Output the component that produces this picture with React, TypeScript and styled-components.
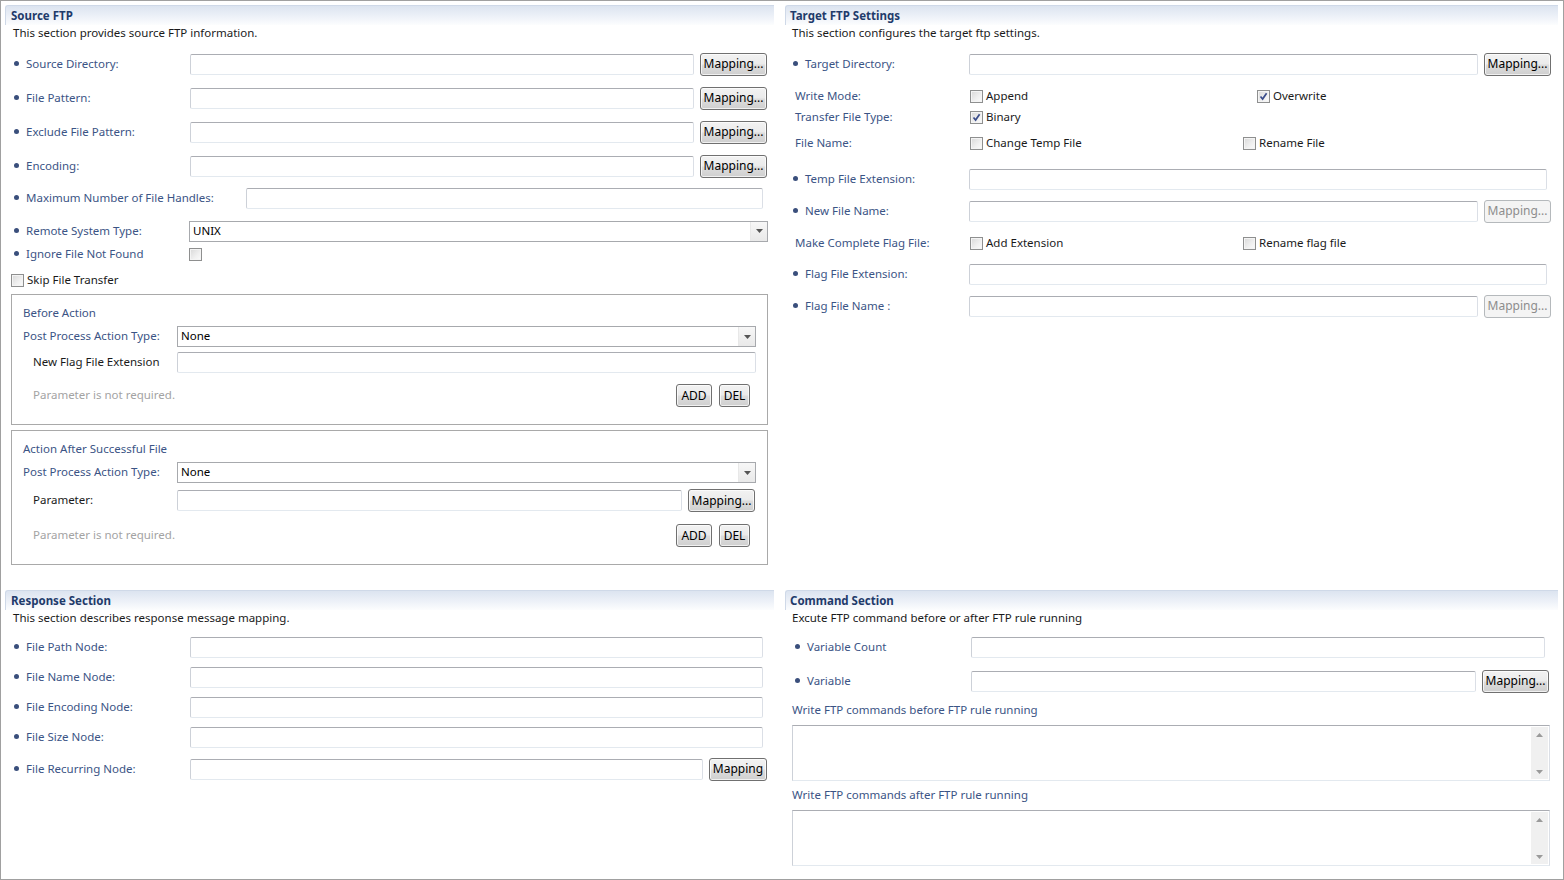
import React from 'react';
import styled, { createGlobalStyle } from 'styled-components';

const Global = createGlobalStyle`
  html, body { margin: 0; padding: 0; background: #fff; }
  body { font-family: "Noto Sans", "Liberation Sans", sans-serif; font-size: 11.5px; color: #1a1a1a; }
  * { box-sizing: border-box; }
`;

const Page = styled.div`
  width: 1564px;
  height: 880px;
  border: 1px solid #a0a0a0;
  padding: 4px 5px 4px 4px;
  display: grid;
  grid-template-columns: 769px 773px;
  grid-template-rows: 585px 1fr;
  column-gap: 11px;
  background: #fff;
`;

const Section = styled.section`
  display: flex;
  flex-direction: column;
  min-width: 0;
`;

const Header = styled.div<{ $pl: number }>`
  height: 20px;
  padding-left: ${p => p.$pl}px;
  line-height: 19px;
  font-weight: 700;
  color: #1f3b6b;
  border-top: 1px solid #cfd9e8;
  border-left: 1px solid #cfd9e8;
  border-top-left-radius: 3px;
  background: linear-gradient(to bottom, #dce4f0 0%, #edf1f8 55%, #fcfdfe 100%);
`;

const Desc = styled.div<{ $pl: number }>`
  height: 16px;
  line-height: 16px;
  padding-left: ${p => p.$pl}px;
  color: #1a1a1a;
`;

const Row = styled.div<{ $mt: number; $h?: number; $pr?: number; $pl?: number }>`
  display: flex;
  align-items: center;
  gap: 6px;
  height: ${p => p.$h ?? 22}px;
  margin-top: ${p => p.$mt}px;
  padding-right: ${p => p.$pr ?? 0}px;
  padding-left: ${p => p.$pl ?? 0}px;
  flex: none;
`;

const Label = styled.div<{ $w: number; $pl: number; $dark?: boolean }>`
  flex: none;
  width: ${p => p.$w}px;
  padding-left: ${p => p.$pl}px;
  padding-bottom: 2px;
  margin-right: -6px;
  display: flex;
  align-items: center;
  white-space: nowrap;
  color: ${p => (p.$dark ? '#1a1a1a' : '#3b5485')};
`;

const Bullet = styled.span`
  flex: none;
  width: 5px;
  height: 5px;
  border-radius: 50%;
  background: #3a4f7c;
  margin-right: 7px;
  margin-top: 1px;
`;

const Field = styled.div<{ $h?: number }>`
  flex: 1;
  min-width: 0;
  height: ${p => p.$h ?? 21}px;
  border: 1px solid;
  border-color: #abadb3 #dbdfe6 #e3e9ef #cdd1d8;
  border-radius: 2px;
  background: #fff;
`;

const Combo = styled.div`
  flex: 1;
  min-width: 0;
  height: 21px;
  border: 1px solid #a7a9ad;
  background: #fff;
  display: flex;
  align-items: stretch;
`;

const ComboText = styled.div`
  flex: 1;
  padding-left: 3px;
  line-height: 18px;
  color: #000;
`;

const ComboArrow = styled.div`
  flex: none;
  width: 17px;
  border-left: 1px solid #e8e8e8;
  background: linear-gradient(to bottom, #f7f7f7, #e9e9e9);
  display: flex;
  align-items: center;
  justify-content: center;
`;

const Btn = styled.div<{ $w: number; $disabled?: boolean }>`
  flex: none;
  width: ${p => p.$w}px;
  height: 23px;
  border: 1px solid ${p => (p.$disabled ? '#b5b9bc' : '#707070')};
  border-radius: 3px;
  background: ${p =>
    p.$disabled
      ? '#f4f4f4'
      : 'linear-gradient(to bottom, #f2f2f2 0%, #ebebeb 48%, #dddddd 52%, #cfcfcf 100%)'};
  box-shadow: ${p => (p.$disabled ? 'none' : 'inset 0 0 0 1px rgba(255,255,255,0.7)')};
  color: ${p => (p.$disabled ? '#8d8d8d' : '#000')};
  display: flex;
  align-items: center;
  justify-content: center;
  line-height: 1;
  font-size: 12px;
  white-space: nowrap;
`;

const BoxMark = styled.span`
  flex: none;
  width: 13px;
  height: 13px;
  border: 1px solid #8e8f8f;
  background: linear-gradient(135deg, #d8d8d8 0%, #f0f0f0 60%, #fbfbfb 100%);
  box-shadow: inset 0 0 0 1px #f4f4f4;
  display: flex;
  align-items: center;
  justify-content: center;
`;

const CheckItem = styled.div<{ $w?: number }>`
  flex: none;
  width: ${p => (p.$w ? `${p.$w}px` : 'auto')};
  display: flex;
  align-items: center;
  gap: 3px;
  color: #1a1a1a;
  white-space: nowrap;
`;

const CheckText = styled.span`
  margin-top: -2px;
`;

const Group = styled.div<{ $mt: number; $h: number }>`
  flex: none;
  height: ${p => p.$h}px;
  margin: ${p => p.$mt}px 6px 0 6px;
  border: 1px solid #a9a9a9;
  padding: 10px 11px 0 11px;
  display: flex;
  flex-direction: column;
`;

const GroupTitle = styled.div`
  height: 16px;
  line-height: 16px;
  color: #3b5485;
`;

const Hint = styled.div`
  flex: 1;
  padding-left: 10px;
  padding-bottom: 2px;
  color: #a3a3a3;
`;

const TextLine = styled.div<{ $mt: number; $pl: number }>`
  height: 16px;
  line-height: 16px;
  margin-top: ${p => p.$mt}px;
  padding-left: ${p => p.$pl}px;
  color: #3b5485;
`;

const TextArea = styled.div<{ $mt: number }>`
  flex: none;
  height: 56px;
  margin: ${p => p.$mt}px 8px 0 7px;
  border: 1px solid;
  border-color: #abadb3 #dbdfe6 #e3e9ef #cdd1d8;
  display: flex;
  justify-content: flex-end;
  background: #fff;
`;

const ScrollBar = styled.div`
  width: 17px;
  margin: 1px 1px 1px 0;
  background: #f0f0f0;
  display: flex;
  flex-direction: column;
  justify-content: space-between;
  align-items: center;
  padding: 6px 0 5px;
`;

const Arrow = ({ up }: { up?: boolean }) => (
  <svg width="7" height="4" viewBox="0 0 7 4">
    <path d={up ? 'M0 4 L3.5 0 L7 4 Z' : 'M0 0 L7 0 L3.5 4 Z'} fill="#9a9a9a" />
  </svg>
);

const Check = ({ checked, w, children }: { checked?: boolean; w?: number; children?: React.ReactNode }) => (
  <CheckItem $w={w}>
    <BoxMark>
      {checked && (
        <svg width="9" height="9" viewBox="0 0 9 9">
          <path d="M1.5 4.5 L3.6 7 L7.6 1.2" fill="none" stroke="#3a4c8a" strokeWidth="1.7" />
        </svg>
      )}
    </BoxMark>
    {children && <CheckText>{children}</CheckText>}
  </CheckItem>
);

const DropDown = ({ value }: { value: string }) => (
  <Combo>
    <ComboText>{value}</ComboText>
    <ComboArrow>
      <svg width="7" height="4" viewBox="0 0 7 4">
        <path d="M0 0 L7 0 L3.5 4 Z" fill="#555" />
      </svg>
    </ComboArrow>
  </Combo>
);

const BL = ({ w, pl, children }: { w: number; pl: number; children: React.ReactNode }) => (
  <Label $w={w} $pl={pl}>
    <Bullet />
    {children}
  </Label>
);

export default function App() {
  return (
    <>
      <Global />
      <Page>
        {/* Source FTP */}
        <Section>
          <Header $pl={5}>Source FTP</Header>
          <Desc $pl={8}>This section provides source FTP information.</Desc>
          {['Source Directory:', 'File Pattern:', 'Exclude File Pattern:', 'Encoding:'].map(t => (
            <Row key={t} $mt={12} $pr={7}>
              <BL w={185} pl={9}>{t}</BL>
              <Field />
              <Btn $w={67}>Mapping...</Btn>
            </Row>
          ))}
          <Row $mt={10} $pr={11}>
            <BL w={241} pl={9}>Maximum Number of File Handles:</BL>
            <Field />
          </Row>
          <Row $mt={11} $pr={6}>
            <BL w={184} pl={9}>Remote System Type:</BL>
            <DropDown value="UNIX" />
          </Row>
          <Row $mt={1}>
            <BL w={184} pl={9}>Ignore File Not Found</BL>
            <Check />
          </Row>
          <Row $mt={4} $pl={6}>
            <Check>Skip File Transfer</Check>
          </Row>
          <Group $mt={3} $h={131}>
            <GroupTitle>Before Action</GroupTitle>
            <Row $mt={5} $h={21}>
              <Label $w={154} $pl={0}>Post Process Action Type:</Label>
              <DropDown value="None" />
            </Row>
            <Row $mt={5} $h={21}>
              <Label $w={154} $pl={10} $dark>New Flag File Extension</Label>
              <Field />
            </Row>
            <Row $mt={11} $h={23} $pr={6}>
              <Hint>Parameter is not required.</Hint>
              <Btn $w={36}>ADD</Btn>
              <Btn $w={31} style={{ marginLeft: 1 }}>DEL</Btn>
            </Row>
          </Group>
          <Group $mt={5} $h={135}>
            <GroupTitle>Action After Successful File</GroupTitle>
            <Row $mt={5} $h={21}>
              <Label $w={154} $pl={0}>Post Process Action Type:</Label>
              <DropDown value="None" />
            </Row>
            <Row $mt={6} $h={23} $pr={1}>
              <Label $w={154} $pl={10} $dark>Parameter:</Label>
              <Field />
              <Btn $w={67}>Mapping...</Btn>
            </Row>
            <Row $mt={12} $h={23} $pr={6}>
              <Hint>Parameter is not required.</Hint>
              <Btn $w={36}>ADD</Btn>
              <Btn $w={31} style={{ marginLeft: 1 }}>DEL</Btn>
            </Row>
          </Group>
        </Section>

        {/* Target FTP */}
        <Section>
          <Header $pl={4}>Target FTP Settings</Header>
          <Desc $pl={7}>This section configures the target ftp settings.</Desc>
          <Row $mt={12} $pr={7}>
            <BL w={184} pl={8}>Target Directory:</BL>
            <Field />
            <Btn $w={67}>Mapping...</Btn>
          </Row>
          <Row $mt={11} $h={20}>
            <Label $w={185} $pl={10}>Write Mode:</Label>
            <Check w={281}>Append</Check>
            <Check checked>Overwrite</Check>
          </Row>
          <Row $mt={1} $h={20}>
            <Label $w={185} $pl={10}>Transfer File Type:</Label>
            <Check checked>Binary</Check>
          </Row>
          <Row $mt={6} $h={20}>
            <Label $w={185} $pl={10}>File Name:</Label>
            <Check w={267}>Change Temp File</Check>
            <Check>Rename File</Check>
          </Row>
          <Row $mt={15} $pr={11}>
            <BL w={184} pl={8}>Temp File Extension:</BL>
            <Field />
          </Row>
          <Row $mt={10} $pr={7}>
            <BL w={184} pl={8}>New File Name:</BL>
            <Field />
            <Btn $w={67} $disabled>Mapping...</Btn>
          </Row>
          <Row $mt={11} $h={20}>
            <Label $w={185} $pl={10}>Make Complete Flag File:</Label>
            <Check w={267}>Add Extension</Check>
            <Check>Rename flag file</Check>
          </Row>
          <Row $mt={10} $pr={11}>
            <BL w={184} pl={8}>Flag File Extension:</BL>
            <Field />
          </Row>
          <Row $mt={10} $pr={7}>
            <BL w={184} pl={8}>Flag File Name :</BL>
            <Field />
            <Btn $w={67} $disabled>Mapping...</Btn>
          </Row>
        </Section>

        {/* Response Section */}
        <Section>
          <Header $pl={5}>Response Section</Header>
          <Desc $pl={8}>This section describes response message mapping.</Desc>
          {['File Path Node:', 'File Name Node:', 'File Encoding Node:', 'File Size Node:'].map((t, i) => (
            <Row key={t} $mt={i === 0 ? 10 : 8} $pr={11}>
              <BL w={185} pl={9}>{t}</BL>
              <Field />
            </Row>
          ))}
          <Row $mt={10} $pr={7}>
            <BL w={185} pl={9}>File Recurring Node:</BL>
            <Field />
            <Btn $w={58}>Mapping</Btn>
          </Row>
        </Section>

        {/* Command Section */}
        <Section>
          <Header $pl={4}>Command Section</Header>
          <Desc $pl={7}>Excute FTP command before or after FTP rule running</Desc>
          <Row $mt={10} $pr={13}>
            <BL w={186} pl={10}>Variable Count</BL>
            <Field />
          </Row>
          <Row $mt={12} $pr={9}>
            <BL w={186} pl={10}>Variable</BL>
            <Field />
            <Btn $w={67}>Mapping...</Btn>
          </Row>
          <TextLine $mt={10} $pl={7}>Write FTP commands before FTP rule running</TextLine>
          <TextArea $mt={7}>
            <ScrollBar>
              <Arrow up />
              <Arrow />
            </ScrollBar>
          </TextArea>
          <TextLine $mt={6} $pl={7}>Write FTP commands after FTP rule running</TextLine>
          <TextArea $mt={7}>
            <ScrollBar>
              <Arrow up />
              <Arrow />
            </ScrollBar>
          </TextArea>
        </Section>
      </Page>
    </>
  );
}
